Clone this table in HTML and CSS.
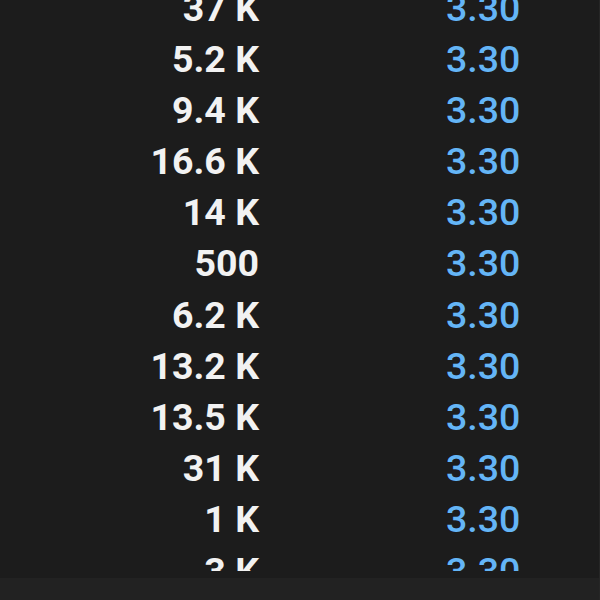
FILE: index.html
```html
<!DOCTYPE html>
<html lang="en">
<head>
    <meta charset="UTF-8">
    <meta name="viewport" content="width=device-width, initial-scale=1.0">
    <title>Volume & Price</title>
    <link rel="stylesheet" href="styles.css">
</head>
<body>
    <div class="panel">
        <!-- Scrolled list of volume / price rows -->
        <div class="table">
            <div class="rows">
                <div class="row"><span class="volume">37 K</span><span class="price">3.30</span></div>
                <div class="row"><span class="volume">5.2 K</span><span class="price">3.30</span></div>
                <div class="row"><span class="volume">9.4 K</span><span class="price">3.30</span></div>
                <div class="row"><span class="volume">16.6 K</span><span class="price">3.30</span></div>
                <div class="row"><span class="volume">14 K</span><span class="price">3.30</span></div>
                <div class="row"><span class="volume">500</span><span class="price">3.30</span></div>
                <div class="row"><span class="volume">6.2 K</span><span class="price">3.30</span></div>
                <div class="row"><span class="volume">13.2 K</span><span class="price">3.30</span></div>
                <div class="row"><span class="volume">13.5 K</span><span class="price">3.30</span></div>
                <div class="row"><span class="volume">31 K</span><span class="price">3.30</span></div>
                <div class="row"><span class="volume">1 K</span><span class="price">3.30</span></div>
                <div class="row"><span class="volume">3 K</span><span class="price">3.30</span></div>
                <div class="row"><span class="volume">8 K</span><span class="price">3.30</span></div>
            </div>
        </div>
        <div class="footer"></div>
    </div>
</body>
</html>
```

FILE: styles.css
```css
html, body {
    margin: 0;
    background-color: #1c1c1c;
}
body {
    font-family: Roboto, "Liberation Sans", sans-serif;
}
.panel {
    height: 600px;
    border-right: 1px solid #262626;
    display: flex;
    flex-direction: column;
}
.table {
    height: 571px;
    overflow: hidden;
}
.rows {
    margin-top: -17.5px;
}
.row {
    display: grid;
    grid-template-columns: 259px 1fr;
    column-gap: 187px;
    height: 51.2px;
    line-height: 51.2px;
    font-size: 37.5px;
}
.volume {
    text-align: right;
    font-weight: 700;
    color: #f2f2f2;
}
.price {
    font-weight: 500;
    color: #64b5f6;
}
.footer {
    margin-top: 7px;
    flex: 1;
    background-color: #222222;
}
```
